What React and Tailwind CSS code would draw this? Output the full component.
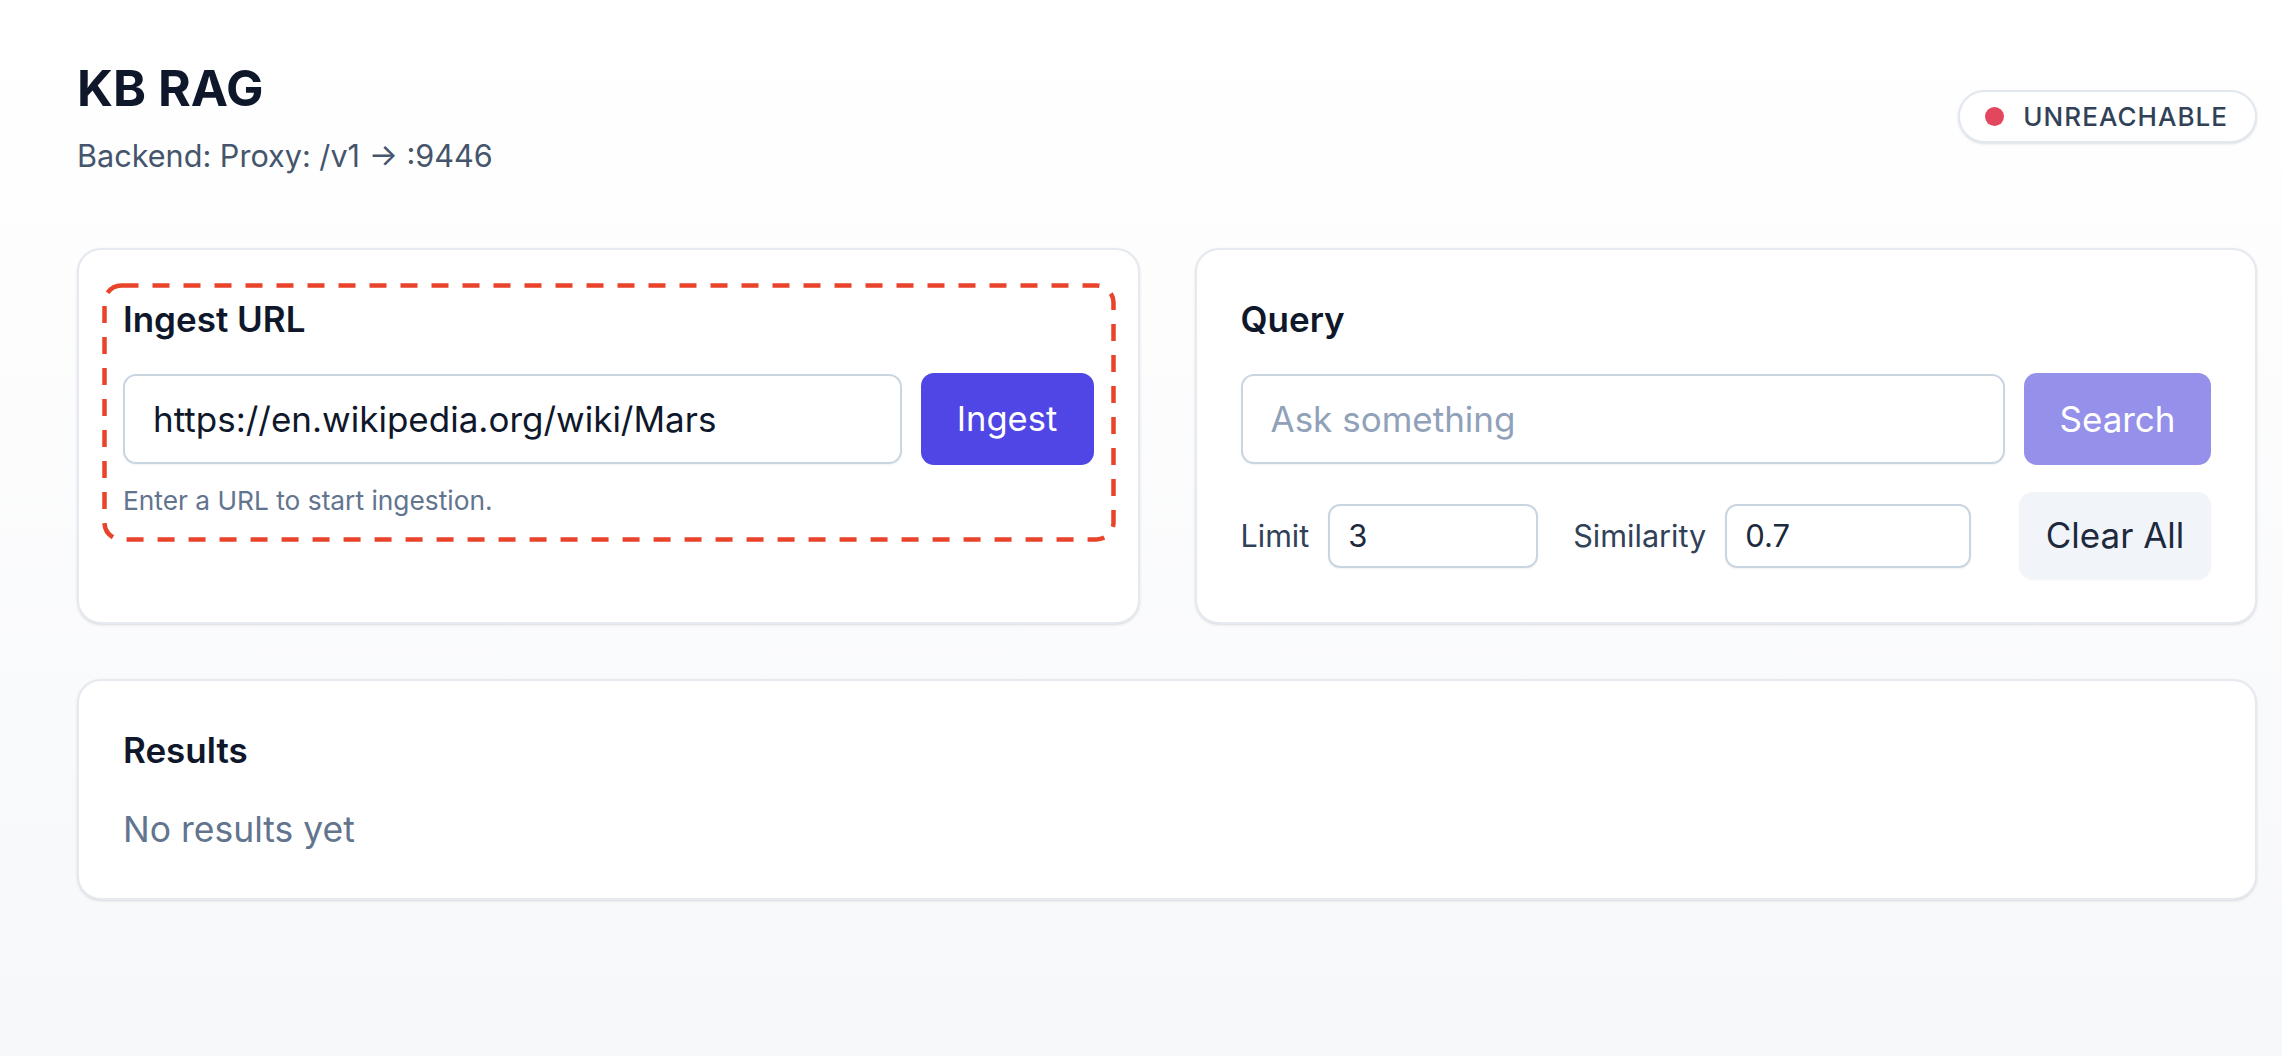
import { useState } from 'react';

function Card({ children, className = '' }) {
  return (
    <div className={`bg-white border-2 border-[#e6e9ef] rounded-[24px] shadow-sm px-[44px] pt-[41px] pb-[43px] ${className}`}>
      {children}
    </div>
  );
}

function StatusPill() {
  return (
    <div className="flex items-center gap-[19px] h-[53px] pl-[25px] pr-[27px] bg-white border-2 border-slate-200 rounded-full shadow-sm">
      <span className="w-[19px] h-[19px] rounded-full bg-[#e2475e]" />
      <span className="text-[26px] font-medium tracking-[0.04em] text-slate-700">UNREACHABLE</span>
    </div>
  );
}

export default function App() {
  const [url, setUrl] = useState('https://en.wikipedia.org/wiki/Mars');
  const [query, setQuery] = useState('');
  const [limit, setLimit] = useState('3');
  const [similarity, setSimilarity] = useState('0.7');

  return (
    <div className="min-h-screen bg-linear-to-b from-white to-[#f7f8fa] font-['Inter',sans-serif] pl-[77px] pr-[25px] pt-[56px] pb-[60px]">
      {/* Header */}
      <header className="flex items-center justify-between">
        <div>
          <h1 className="text-[50px] leading-[64px] font-bold text-slate-900">KB RAG</h1>
          <p className="mt-[16px] text-[30.6px] leading-[40px] text-slate-600">Backend: Proxy: /v1 → :9446</p>
        </div>
        <StatusPill />
      </header>

      <div className="grid grid-cols-2 gap-[55px] mt-[72px]">
        {/* Ingest */}
        <Card>
          <div className="relative">
            <h2 className="text-[35px] leading-[56px] font-semibold text-slate-900 mb-[26px]">Ingest URL</h2>
            <div className="flex items-center gap-[19px]">
              <input
                value={url}
                onChange={e => setUrl(e.target.value)}
                className="flex-1 min-w-0 h-[90px] px-[28px] text-[35px] text-slate-900 bg-white border-2 border-slate-300 rounded-[13px] shadow-xs outline-none"
              />
              <button className="w-[173px] h-[92px] rounded-[13px] bg-[#4f46e5] text-white text-[34.5px]">Ingest</button>
            </div>
            <p className="mt-[16px] text-[26.3px] leading-[40px] text-slate-500">Enter a URL to start ingestion.</p>
            <svg className="absolute -top-[8px] -left-[21px] pointer-events-none" width="1014" height="259">
              <rect x="2.5" y="2.5" width="1009" height="254" rx="17" fill="none" stroke="#e9432b" strokeWidth="4.5" strokeDasharray="17 14" />
            </svg>
          </div>
        </Card>

        {/* Query */}
        <Card>
          <h2 className="text-[35px] leading-[56px] font-semibold text-slate-900 mb-[26px]">Query</h2>
          <div className="flex items-center gap-[19px]">
            <input
              value={query}
              onChange={e => setQuery(e.target.value)}
              placeholder="Ask something"
              className="flex-1 min-w-0 h-[90px] px-[28px] text-[35px] text-slate-900 placeholder:text-slate-400 bg-white border-2 border-slate-300 rounded-[13px] shadow-xs outline-none"
            />
            <button className="w-[187px] h-[92px] rounded-[13px] bg-[#9590e9] text-white text-[35px]">Search</button>
          </div>
          <div className="flex items-center mt-[27px]">
            <label className="text-[30.5px] text-slate-700">Limit</label>
            <input
              value={limit}
              onChange={e => setLimit(e.target.value)}
              className="ml-[19px] w-[210px] h-[64px] px-[18px] text-[31px] text-slate-800 bg-white border-2 border-slate-300 rounded-[12px] shadow-xs outline-none"
            />
            <label className="ml-[35px] text-[30.6px] text-slate-700">Similarity</label>
            <input
              value={similarity}
              onChange={e => setSimilarity(e.target.value)}
              className="ml-[19px] w-[246px] h-[64px] px-[18px] text-[31px] text-slate-800 bg-white border-2 border-slate-300 rounded-[12px] shadow-xs outline-none"
            />
            <button className="ml-auto w-[192px] h-[87px] rounded-[14px] bg-slate-100 shadow-xs text-[35px] text-slate-800">Clear All</button>
          </div>
        </Card>
      </div>

      {/* Results */}
      <Card className="mt-[55px] pb-[44px]">
        <h2 className="text-[35px] leading-[56px] font-semibold text-slate-900 mb-[28px]">Results</h2>
        <p className="text-[35.5px] leading-[48px] text-slate-500">No results yet</p>
      </Card>
    </div>
  );
}
